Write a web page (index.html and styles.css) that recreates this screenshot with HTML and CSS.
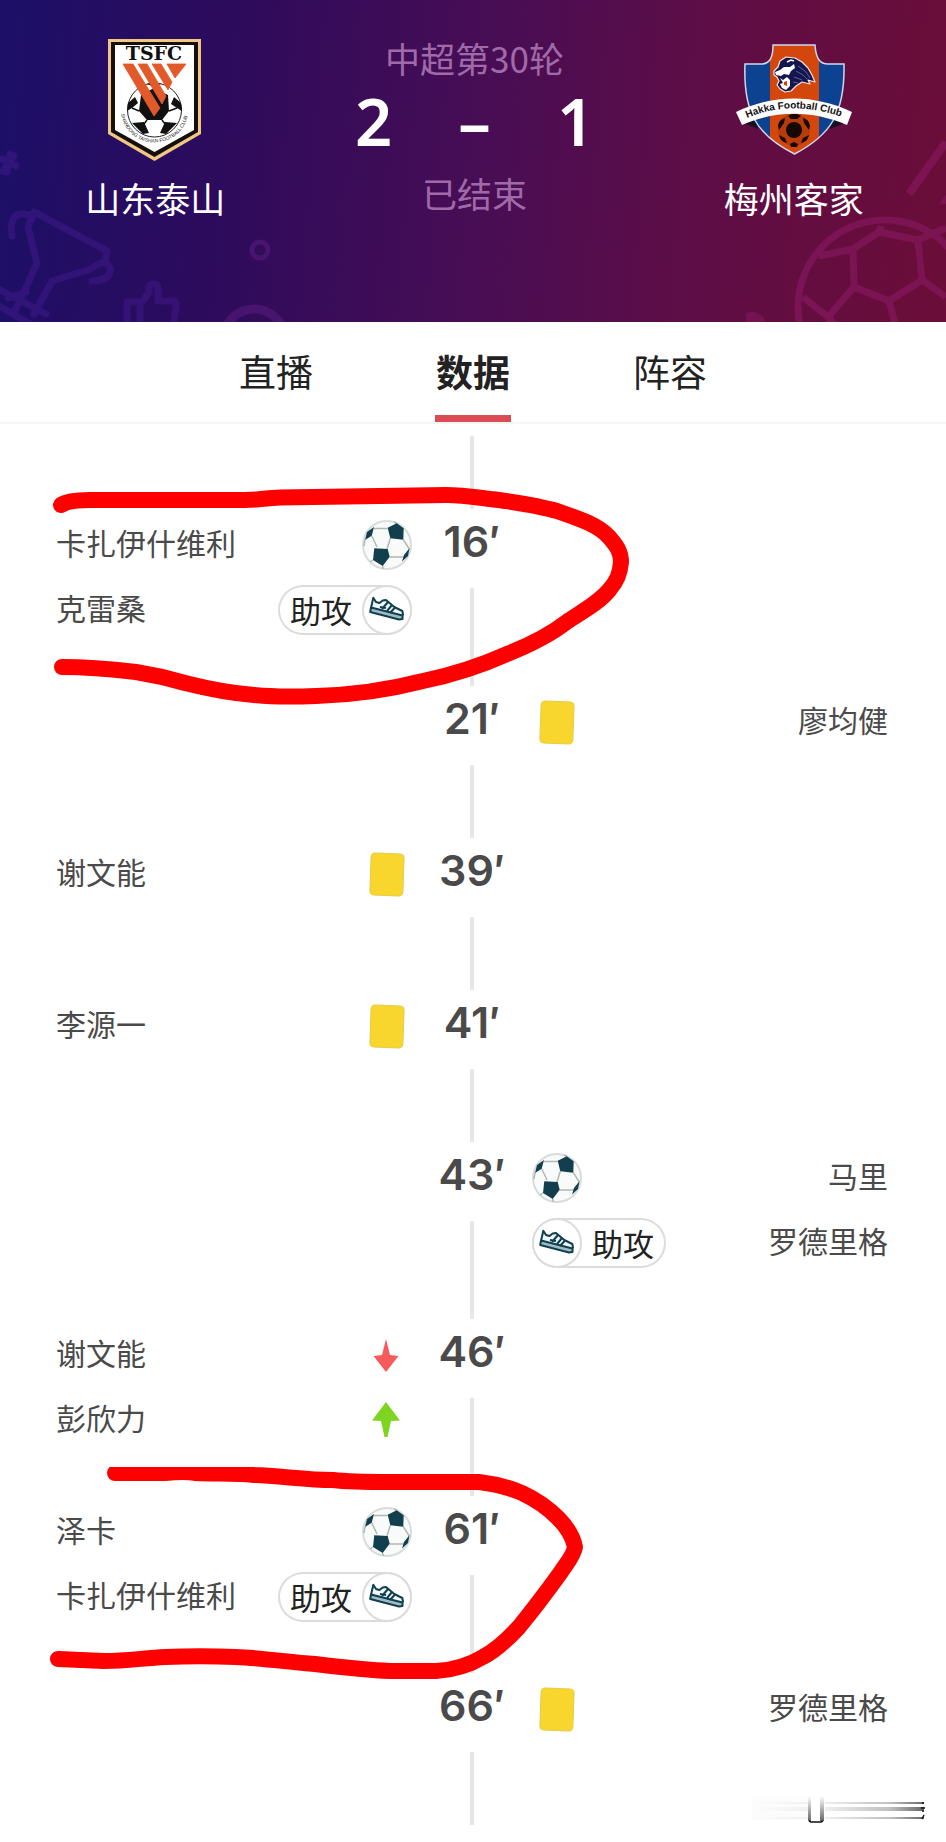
FILE: index.html
```html
<!DOCTYPE html>
<html lang="zh-CN">
<head>
    <meta charset="UTF-8">
    <meta name="viewport" content="width=device-width, initial-scale=1.0">
    <title>山东泰山 2 - 1 梅州客家</title>
    <link rel="stylesheet" href="styles.css">
</head>
<body>
    <!-- Shared icons -->
    <svg class="icon-defs" aria-hidden="true">
        <symbol id="icon-ball" viewBox="0 0 50 50">
            <circle cx="25" cy="25" r="24" fill="#f9fbfb" stroke="#d9dcdc" stroke-width="2"/>
            <path d="M11.7 8.5 25.7 8.5M28.3 18.3 25 29M9.7 15.7 15 27M41.3 19.7 47.3 29M27.7 37 42 37M3 19.7 2 26M11 40 8 42M20.7 46 21 49M34.7 3.3 32 2" fill="none" stroke="#b3b8b3" stroke-width="1.5"/>
            <path d="M25.7 7.7 34.7 3.3 41.7 8.3 41.3 19.7 28.3 18.3ZM12.3 28.3 25.7 29 27.7 36.7 20.7 46 11 40ZM12 7 9.7 15.7 3 20 5 12ZM47.6 28 46 36 40 41.5 42 35Z" fill="#123f4d"/>
        </symbol>
        <symbol id="icon-shoe" viewBox="0 0 50 50">
            <circle cx="25" cy="25" r="24" fill="#fff" stroke="#dcdcdc" stroke-width="2"/>
            <path d="M11.3 12.8 9 23 39.5 31.5 41 29.5 40.3 26 32.3 22 24 15 20.7 15.5 17.5 18 14 17Z" fill="#eef7fb" stroke="#123f4d" stroke-width="2" stroke-linejoin="round"/>
            <path d="M9 22.5 8.2 27 37 34.5 40.5 34 40.5 30.5Z" fill="#9fbcc6" stroke="#123f4d" stroke-width="2" stroke-linejoin="round"/>
            <path d="M26 17 20 24M30 20 25 26M33 22.5 28 28M18 22 24 23" fill="none" stroke="#123f4d" stroke-width="2"/>
        </symbol>
        <symbol id="icon-card" viewBox="0 0 50 50">
            <rect x="8.5" y="4.5" width="33" height="42" rx="4" fill="#f8d62e" stroke="#e6ca45" transform="rotate(2 25 25)"/>
        </symbol>
        <symbol id="icon-off" viewBox="0 0 50 50">
            <path d="M24 9 28 25 36.5 26 24 42 11.500 26 20 25Z" fill="#f65b5b"/>
        </symbol>
        <symbol id="icon-on" viewBox="0 0 50 50">
            <path d="M24 7 38 25.500 29 26 25.500 42 22.500 42 19 26 10 25.500Z" fill="#7fd321"/>
        </symbol>
    </svg>

    <header class="match-header">
        <svg class="header-art header-art-left" viewBox="0 0 320 180" aria-hidden="true">
            <g fill="none" stroke="#4a1d96" stroke-width="7" stroke-linejoin="round" stroke-linecap="round" opacity="0.4">
                <path d="M2 17 16 24M10 12 7 30M3 29 14 14"/>
                <path d="M34 70 107 109 105 119 88 128 52 139 34 172M34 70 28 85 37 121 24 150 14 170"/>
                <path d="M28 73C14 68 9 80 12 94M104 120C116 127 110 139 92 139"/>
                <path d="M0 148 46 172M-4 162 30 182M8 156 26 150"/>
                <path d="M127 182V160H142L149 150V145C151 140 158 141 158 147V159H174C179 162 174 168 174 182M140 162V182"/>
            </g>
            <g fill="none" stroke="#5d1e83" opacity="0.5">
                <circle cx="260" cy="108" r="8" stroke-width="5"/>
                <circle cx="254" cy="198" r="31" stroke-width="9"/>
            </g>
        </svg>
        <svg class="header-art header-art-right" viewBox="0 0 200 200" aria-hidden="true">
            <g fill="none" stroke="#8a1a63" stroke-width="7" stroke-linejoin="round" opacity="0.6">
                <circle cx="139" cy="185" r="87"/>
                <path d="M135 104 133 110 107 127 108 165 143 179 176 158 172 118 133 110M107 127 73 134M172 118 200 106M176 158 200 175M143 179 150 205M108 165 82 195M57 175 82 195 90 205"/>
                <path d="M163 72 200 20" stroke-width="8"/>
            </g>
            <path d="M193 82 203 68V82Z" fill="#8a1a63" opacity="0.5"/>
            <circle cx="6" cy="204" r="14" fill="#8a1a63" opacity="0.45"/>
        </svg>

        <div class="team">
            <svg class="crest" viewBox="0 0 94 124" role="img" aria-label="山东泰山">
                <path d="M0 1H93V96L46.5 123 0 96Z" fill="#f0c883"/>
                <path d="M3 4H90V94L46.5 119 3 94Z" fill="#15100d"/>
                <path d="M7 7H86V92L46.5 114 7 92Z" fill="#fff"/>
                <text x="46" y="22" text-anchor="middle" class="crest-title">TSFC</text>
                <circle cx="46.5" cy="72" r="27" fill="#fff" stroke="#222"/>
                <path d="M33 57 46 50 60 57 61 73 54 82H39L31 73ZM20 65 27 59 30 65 24 70 19 73ZM73 65 66 59 63 66 69 70 74 73ZM24 85 36 84 41 95 35 96ZM69 85 57 84 52 95 58 96ZM39 46 46 44 53 46 46 49Z" fill="#111"/>
                <path d="M31 73 24 70M61 73 69 70M39 82 36 86M54 82 57 86" stroke="#111" stroke-width="1.5"/>
                <path d="M15 26H25L52 70 46 78ZM30 26H39L58 58 54 66ZM44 26H53L64 44 60 52ZM59 26H78L67 40Z" fill="#e2592a" stroke="#e2592a" stroke-width="0.8"/>
                <path id="crest-arc" d="M13 76C20 114 73 114 80 76" fill="none"/>
                <text class="crest-ring"><textPath href="#crest-arc">SHANDONG TAISHAN FOOTBALL CLUB</textPath></text>
            </svg>
            <span class="team-name">山东泰山</span>
        </div>

        <div class="score-box">
            <span class="round">中超第30轮</span>
            <div class="score">
                <span>2</span>
                <span>–</span>
                <span>1</span>
            </div>
            <span class="status">已结束</span>
        </div>

        <div class="team">
            <svg class="crest" viewBox="0 0 116 124" role="img" aria-label="梅州客家">
                <g transform="translate(0 5)">
                    <clipPath id="shield"><path d="M37 2H79C80 16 84 21 92 21H108C109 70 95 92 58.5 111 21 92 7 70 9 21H25C33 21 37 16 37 2Z"/></clipPath>
                    <path d="M5 79 20 76 22 86ZM111 79 96 76 94 86Z" fill="#161022"/>
                    <g clip-path="url(#shield)">
                        <path d="M0 0H116V113H0Z" fill="#0d4290"/>
                        <path d="M34 0H83V113H34Z" fill="#d3470c"/>
                    </g>
                    <path d="M37 2H79C80 16 84 21 92 21H108C109 70 95 92 58.5 111 21 92 7 70 9 21H25C33 21 37 16 37 2Z" fill="none" stroke="#cdd9f0" stroke-width="1.5"/>
                    <!-- Lion head -->
                    <path d="M38 28 42 24 44 18 50 14 59 15 66 19 72 25 76 32 79 39 72 37 74 41 66 39 60 43 55 48 49 49 44 46 41 42 43 38 41 34 38 32Z" fill="#16164f" stroke="#f6e5e0" stroke-width="1.2" stroke-linejoin="round"/>
                    <path d="M39 29 44 27 48 24 54 24 58 21 59 25 55 28 53 32 48 31 45 33 40 32Z" fill="#fff"/>
                    <path d="M44 35 47 37 51 34 54 37 54 43 50 47 46 45 44 41 47 40Z" fill="#fff"/>
                    <path d="M48 39 51 38 51 43 48 42Z" fill="#d3470c"/>
                    <path d="M51 19 55 17 58 18" fill="none" stroke="#fff" stroke-width="1.5"/>
                    <path d="M62 23 70 29 74 35M60 28 67 32 71 36M58 34 66 37M57 39 62 40" fill="none" stroke="#6672ab" stroke-width="0.8"/>
                    <circle cx="58" cy="87" r="16" fill="#b83b0b"/>
                    <circle cx="58" cy="87" r="8" fill="#150906"/>
                    <path d="M52 73C56 70 61 70 65 73L61 76H55ZM42 83C43 78 45 76 49 75L48 80 43 87ZM74 83C73 78 71 76 67 75L68 80 73 87ZM43 92 49 95 51 100C46 99 44 96 43 92ZM73 92 67 95 65 100C70 99 72 96 73 92ZM54 101 58 99 62 101 61 104H55Z" fill="#150906"/>
                    <path d="M0 69C38 51 78 51 116 69L111 82C76 67 40 67 6 82Z" fill="#fff"/>
                    <path id="banner-arc" d="M11 75C42 62 74 62 112 76" fill="none"/>
                    <text class="crest-banner"><textPath href="#banner-arc">Hakka Football Club</textPath></text>
                </g>
            </svg>
            <span class="team-name">梅州客家</span>
        </div>
    </header>

    <nav class="tabs">
        <a class="tab" href="#live">直播</a>
        <a class="tab tab-active" href="#data" aria-current="page">数据</a>
        <a class="tab" href="#lineup">阵容</a>
    </nav>

    <main id="data">
        <ol class="timeline">
            <li class="event event-double">
                <div class="side home">
                    <div class="row"><span class="player">卡扎伊什维利</span><svg class="icon" role="img" aria-label="进球"><use href="#icon-ball"/></svg></div>
                    <div class="row"><span class="player">克雷桑</span><span class="assist">助攻<svg class="icon" aria-hidden="true"><use href="#icon-shoe"/></svg></span></div>
                </div>
                <div class="axis"><time>16′</time></div>
                <svg class="mark" viewBox="0 480 700 240" aria-hidden="true">
                    <path d="M61 505C67 501 76 500 90 500L245 500C260 500 265 498 280 497.5L446 495C465 495 480 498 499 500C520 503 540 506 557 511C580 519 598 525 609 537C617 546 621 552 621 562C620 574 617 581 610 589C600 602 583 611 568 621C550 635 530 645 507 654C480 666 452 675 423 681C388 690 352 695 316 696C290 697 274 697 254 695C228 693 205 688 185 683C168 678 155 675 136 672C110 669 90 667 62 667"/>
                </svg>
            </li>
            <li class="event">
                <div class="axis"><time>21′</time></div>
                <div class="side away">
                    <div class="row"><svg class="icon" role="img" aria-label="黄牌"><use href="#icon-card"/></svg><span class="player">廖均健</span></div>
                </div>
            </li>
            <li class="event">
                <div class="side home">
                    <div class="row"><span class="player">谢文能</span><svg class="icon" role="img" aria-label="黄牌"><use href="#icon-card"/></svg></div>
                </div>
                <div class="axis"><time>39′</time></div>
            </li>
            <li class="event">
                <div class="side home">
                    <div class="row"><span class="player">李源一</span><svg class="icon" role="img" aria-label="黄牌"><use href="#icon-card"/></svg></div>
                </div>
                <div class="axis"><time>41′</time></div>
            </li>
            <li class="event event-double">
                <div class="axis"><time>43′</time></div>
                <div class="side away">
                    <div class="row"><svg class="icon" role="img" aria-label="进球"><use href="#icon-ball"/></svg><span class="player">马里</span></div>
                    <div class="row"><span class="assist"><svg class="icon" aria-hidden="true"><use href="#icon-shoe"/></svg>助攻</span><span class="player">罗德里格</span></div>
                </div>
            </li>
            <li class="event event-double">
                <div class="side home">
                    <div class="row"><span class="player">谢文能</span><svg class="icon" role="img" aria-label="换下"><use href="#icon-off"/></svg></div>
                    <div class="row"><span class="player">彭欣力</span><svg class="icon" role="img" aria-label="换上"><use href="#icon-on"/></svg></div>
                </div>
                <div class="axis"><time>46′</time></div>
            </li>
            <li class="event event-double">
                <div class="side home">
                    <div class="row"><span class="player">泽卡</span><svg class="icon" role="img" aria-label="进球"><use href="#icon-ball"/></svg></div>
                    <div class="row"><span class="player">卡扎伊什维利</span><span class="assist">助攻<svg class="icon" aria-hidden="true"><use href="#icon-shoe"/></svg></span></div>
                </div>
                <div class="axis"><time>61′</time></div>
                <svg class="mark" viewBox="0 1467 700 240" aria-hidden="true">
                    <path d="M115 1473L165 1473C175 1472 185 1471 195 1473C215 1474 235 1473 254 1475C282 1476 306 1480 333 1480C350 1482 370 1482 390 1482L479 1482C495 1484 508 1487 522 1493C537 1500 548 1508 558 1518C568 1528 573 1537 575 1547C573 1557 566 1564 561 1572C548 1590 533 1610 519 1627C508 1639 496 1650 483 1657C468 1666 453 1670 436 1671L390 1671C365 1670 340 1667 315 1664C288 1662 262 1658 236 1657C212 1656 188 1656 165 1657C144 1658 126 1661 104 1661L58 1659"/>
                </svg>
            </li>
            <li class="event">
                <div class="axis"><time>66′</time></div>
                <div class="side away">
                    <div class="row"><svg class="icon" role="img" aria-label="黄牌"><use href="#icon-card"/></svg><span class="player">罗德里格</span></div>
                </div>
            </li>
        </ol>
        <svg class="smudge" viewBox="0 0 180 32" aria-hidden="true">
            <defs>
                <linearGradient id="fade-x"><stop offset="0" stop-color="#000" stop-opacity="0"/><stop offset="0.4" stop-color="#000" stop-opacity="0.06"/><stop offset="0.8" stop-color="#000" stop-opacity="0.25"/><stop offset="1" stop-color="#000" stop-opacity="0.6"/></linearGradient>
                <linearGradient id="fade-y" x1="0" y1="0" x2="0" y2="1"><stop offset="0" stop-color="#000" stop-opacity="0"/><stop offset="1" stop-color="#000" stop-opacity="0.6"/></linearGradient>
            </defs>
            <path d="M0 4H62V28H0Z" fill="#fcfcfc"/>
            <path d="M4 10H172V12H4ZM4 15H172V19H4ZM4 25H172V27H4Z" fill="url(#fade-x)"/>
            <path d="M56 2H73V30H56Z" fill="#fff"/>
            <path d="M56 4H59V29H56ZM68 4H72V29H68Z" fill="url(#fade-y)"/>
            <path d="M57 29 59 30H69L71 29M170 11H172M169 16H173M170 19H172M172 23 170 27" fill="none" stroke="#111" stroke-width="1.5"/>
        </svg>
    </main>
</body>
</html>
```

FILE: styles.css
```css
* {
    box-sizing: border-box;
}

body {
    margin: 0;
    background: #fff;
    color: #4a4a4a;
    font-family: "Noto Sans CJK SC", sans-serif;
    font-size: 30px;
}

.icon-defs {
    position: absolute;
    width: 0;
    height: 0;
}

/* Header */
.match-header {
    position: relative;
    display: grid;
    grid-template-columns: 1fr 334px 1fr;
    padding: 38px 0 100px 3px;
    background: linear-gradient(95deg, #1c0f68 0%, #2d0b5c 24%, #470d55 50%, #5d0d47 72%, #6b0d38 100%);
    overflow: hidden;
}

.header-art {
    position: absolute;
    bottom: 0;
}

.header-art-left {
    left: 0;
    width: 320px;
}

.header-art-right {
    right: 0;
    width: 200px;
}

.team,
.score-box {
    position: relative;
    display: flex;
    flex-direction: column;
    align-items: center;
}

.crest {
    height: 124px;
}

.crest-title {
    font: bold 19px "DejaVu Serif", serif;
    fill: #111;
}

.crest-ring {
    font: 5px "Liberation Sans", sans-serif;
    fill: #222;
}

.crest-banner {
    font: bold 10px "Liberation Sans", sans-serif;
    fill: #111;
}

.team-name {
    margin-top: 12px;
    color: #fff;
    font-size: 35px;
    line-height: 48px;
}

.round,
.status {
    color: #a06aa8;
    font-size: 35px;
    line-height: 40px;
}

.score {
    display: grid;
    grid-template-columns: repeat(3, 101px);
    margin: 3px 0 12px;
    color: #fff;
    font-family: "Noto Sans", sans-serif;
    font-size: 65px;
    font-weight: 600;
    line-height: 80px;
    text-align: center;
}

/* Tabs */
.tabs {
    display: flex;
    justify-content: center;
    gap: 121px;
    border-bottom: 2px solid #f5f5f5;
}

.tab {
    width: 76px;
    padding: 20px 0 15px;
    border-bottom: 7px solid transparent;
    color: #222;
    font-size: 37px;
    line-height: 58px;
    text-align: center;
    text-decoration: none;
}

.tab-active {
    border-bottom-color: #d94c54;
    font-weight: 700;
}

/* Timeline */
main {
    position: relative;
    padding: 12px 0 17px;
}

.timeline {
    margin: 0;
    padding: 0 2px 0 0;
    list-style: none;
}

.timeline::before {
    content: "";
    display: block;
    width: 4px;
    height: 73px;
    margin: 0 auto;
    background: #e6e6e6;
}

.event {
    position: relative;
    display: grid;
    grid-template-columns: 1fr 120px 1fr;
    min-height: 152px;
    padding: 0 56px;
}

.event-double {
    min-height: 177px;
}

.side {
    padding-top: 3px;
}

.axis {
    grid-column: 2;
    display: flex;
    flex-direction: column;
    align-items: center;
}

.axis::after {
    content: "";
    flex: 1;
    width: 4px;
    margin-top: 15px;
    background: #e6e6e6;
}

time {
    font-family: Inter, sans-serif;
    font-size: 43px;
    font-weight: 600;
    line-height: 64px;
}

.row {
    display: flex;
    justify-content: space-between;
    align-items: center;
    height: 65px;
}

.player {
    padding-bottom: 6px;
}

.icon {
    flex: none;
    width: 50px;
    height: 50px;
}

.assist {
    display: flex;
    align-items: center;
    gap: 10px;
    height: 50px;
    border-radius: 25px;
    box-shadow: inset 0 0 0 2px #dcdcdc;
    color: #222;
    font-size: 31px;
}

.home .assist {
    padding-left: 12px;
}

.away .assist {
    padding-right: 12px;
}

/* Hand-drawn highlight over the goals */
.mark {
    position: absolute;
    top: -29px;
    left: 0;
    z-index: 1;
    width: 700px;
    height: 240px;
    fill: none;
    stroke: #fe0000;
    stroke-width: 16px;
    stroke-linecap: round;
    stroke-linejoin: round;
    pointer-events: none;
}

.smudge {
    position: absolute;
    right: 14px;
    bottom: 18px;
    width: 180px;
}
```
